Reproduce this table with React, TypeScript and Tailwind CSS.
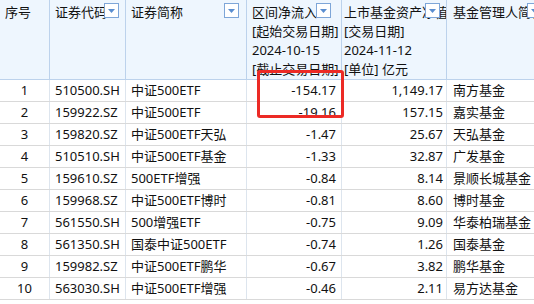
import React from 'react';

type Row = {
  no: number;
  code: string;
  name: string;
  flow: string;
  asset: string;
  manager: string;
};

const rows: Row[] = [
  { no: 1, code: '510500.SH', name: '中证500ETF', flow: '-154.17', asset: '1,149.17', manager: '南方基金' },
  { no: 2, code: '159922.SZ', name: '中证500ETF', flow: '-19.16', asset: '157.15', manager: '嘉实基金' },
  { no: 3, code: '159820.SZ', name: '中证500ETF天弘', flow: '-1.47', asset: '25.67', manager: '天弘基金' },
  { no: 4, code: '510510.SH', name: '中证500ETF基金', flow: '-1.33', asset: '32.87', manager: '广发基金' },
  { no: 5, code: '159610.SZ', name: '500ETF增强', flow: '-0.84', asset: '8.14', manager: '景顺长城基金' },
  { no: 6, code: '159968.SZ', name: '中证500ETF博时', flow: '-0.81', asset: '8.60', manager: '博时基金' },
  { no: 7, code: '561550.SH', name: '500增强ETF', flow: '-0.75', asset: '9.09', manager: '华泰柏瑞基金' },
  { no: 8, code: '561350.SH', name: '国泰中证500ETF', flow: '-0.74', asset: '1.26', manager: '国泰基金' },
  { no: 9, code: '159982.SZ', name: '中证500ETF鹏华', flow: '-0.67', asset: '3.82', manager: '鹏华基金' },
  { no: 10, code: '563030.SH', name: '中证500ETF增强', flow: '-0.46', asset: '2.11', manager: '易方达基金' },
];

const FilterBtn: React.FC<{ className?: string }> = ({ className = '' }) => (
  <span
    className={`absolute top-[3px] w-[15px] h-[15px] bg-white border border-[#7ea6d8] flex items-center justify-center ${className}`}
  >
    <svg width="7" height="4" viewBox="0 0 7 4">
      <path d="M0 0h7L3.5 4z" fill="#5a8ed0" />
    </svg>
  </span>
);

const headCell = 'relative shrink-0 h-full border-r border-[#bcd2ec] overflow-hidden whitespace-nowrap pt-[3px]';
const bodyCell = 'shrink-0 h-full border-r border-[#dde5ee] overflow-hidden whitespace-nowrap flex items-center';

export default function App() {
  return (
    <div
      className="relative w-[534px] h-[304px] overflow-hidden bg-white text-[13px] leading-[19px] text-[#111]"
      style={{ fontFamily: '"Noto Sans", "Noto Sans CJK SC", sans-serif' }}
    >
      <div className="w-[700px]">
        {/* header */}
        <div className="flex h-[80px] bg-[#eef6fe] border-b border-[#bcd2ec]">
          <div className={`${headCell} w-[50px] pl-[5px]`}>序号</div>
          <div className={`${headCell} w-[76px] pl-[5px]`}>
            证券代码
            <FilterBtn className="right-[6px]" />
          </div>
          <div className={`${headCell} w-[121px] pl-[5px]`}>
            证券简称
            <FilterBtn className="right-[7px]" />
          </div>
          <div className={`${headCell} w-[95px] pl-[5px]`}>
            <div>区间净流入</div>
            <div>[起始交易日期]</div>
            <div>2024-10-15</div>
            <div>[截止交易日期]</div>
            <FilterBtn className="right-[10px]" />
          </div>
          <div className={`${headCell} w-[105px] pl-[2px]`}>
            <div>上市基金资产净值</div>
            <div>[交易日期]</div>
            <div>2024-11-12</div>
            <div>[单位] 亿元</div>
            <FilterBtn className="right-[6px]" />
          </div>
          <div className={`${headCell} w-[102px] pl-[6px]`}>
            基金管理人简称
            <FilterBtn className="right-[6px]" />
          </div>
        </div>

        {/* body */}
        {rows.map((r) => (
          <div key={r.no} className="flex h-[22px] border-b border-[#d9d9d9]">
            <div className={`${bodyCell} w-[50px] justify-center`}>{r.no}</div>
            <div className={`${bodyCell} w-[76px] pl-[5px]`}>{r.code}</div>
            <div className={`${bodyCell} w-[121px] pl-[5px]`}>{r.name}</div>
            <div className={`${bodyCell} w-[95px] justify-end pr-[5px]`}>{r.flow}</div>
            <div className={`${bodyCell} w-[105px] justify-end pr-[3px]`}>{r.asset}</div>
            <div className={`${bodyCell} w-[102px] pl-[6px]`}>{r.manager}</div>
          </div>
        ))}
      </div>

      {/* red highlight box */}
      <div className="absolute left-[257px] top-[70px] w-[87px] h-[48px] border-[3px] border-[#ec2a25] rounded-[3px]" />
    </div>
  );
}
